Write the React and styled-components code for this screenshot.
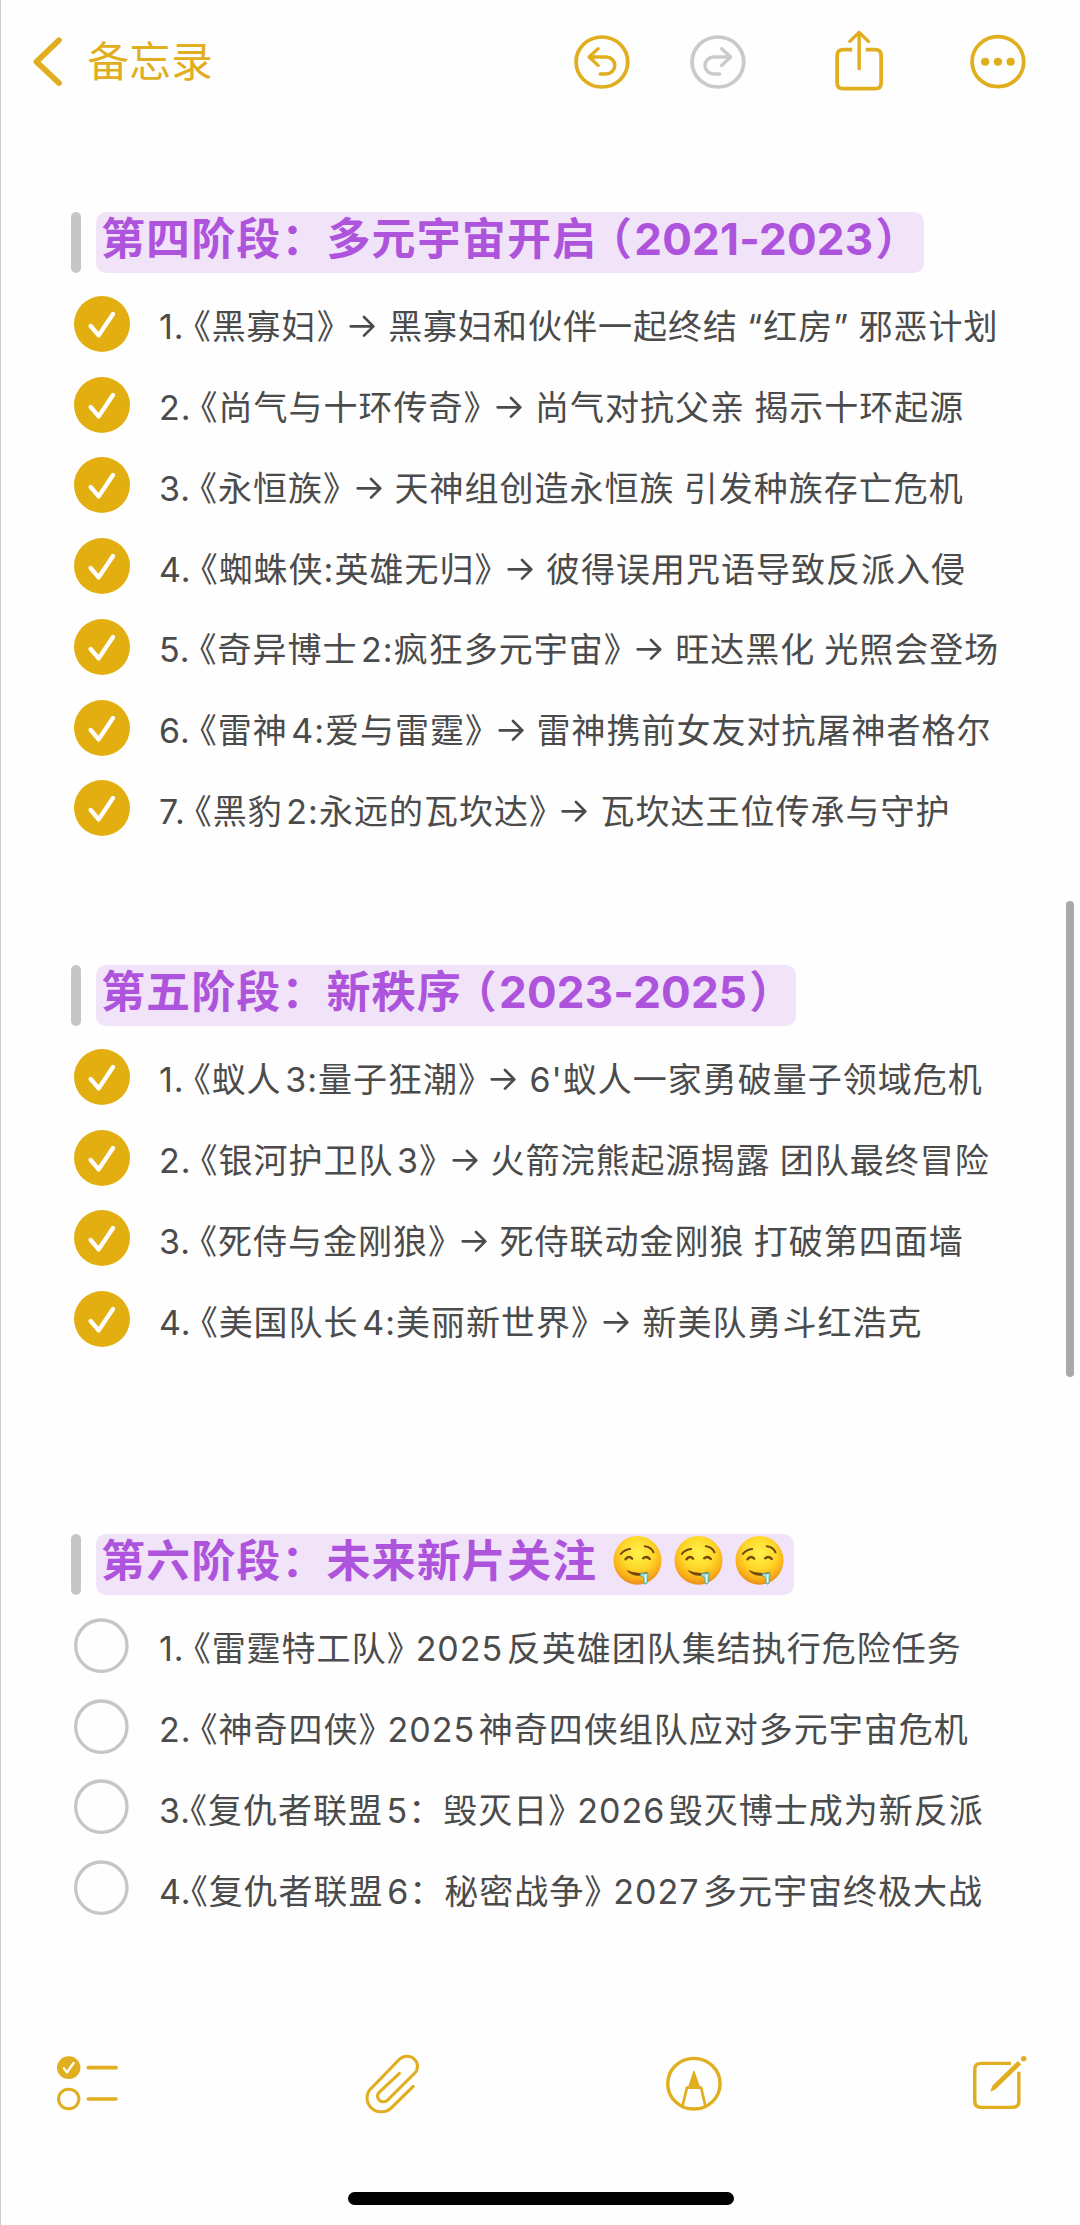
import styled, { createGlobalStyle } from "styled-components";

const GOLD = "#e0ae1e";
const GREY = "#c6c6c6";

const GlobalStyle = createGlobalStyle`
  * {
    box-sizing: border-box;
  }

  body {
    margin: 0;
    background: #fefefe;
    font-family: Inter, "Noto Sans CJK SC", sans-serif;
  }

  svg {
    display: block;
    overflow: visible;
  }
`;

const Screen = styled.main`
  position: relative;
  display: flex;
  flex-direction: column;
  width: 1080px;
  height: 2225px;
  overflow: hidden;
  border-left: 1px solid #cbcbcb;
`;

const Header = styled.header`
  display: grid;
  grid-template-columns: 541px 115.4px 143.9px 136.4px 1fr;
  align-items: center;
  height: 124px;
  padding-left: 32.4px;
`;

const BackButton = styled.div`
  display: flex;
  align-items: center;
  gap: 26px;
  color: ${GOLD};
  font-size: 41.5px;
  letter-spacing: 0.4px;
  line-height: 60px;
`;

const ShareButton = styled.div`
  padding-bottom: 5px;
`;

const Note = styled.div`
  flex: 1;
  padding: 88px 0 0 70px;
`;

const Section = styled.section`
  height: ${({ $height }) => $height}px;
`;

const Heading = styled.h2`
  display: flex;
  gap: 15px;
  height: 61px;
  margin: 0 0 10.6px;
  color: #ae54dc;
  font-size: 44px;
  font-weight: 700;
  line-height: 55px;
  white-space: pre;

  &::before {
    content: "";
    width: 10px;
    border-radius: 5px;
    background: ${GREY};
  }
`;

const Highlight = styled.span`
  display: flex;
  align-items: flex-start;
  width: ${({ $width }) => $width}px;
  padding-left: 5px;
  border-radius: 10px;
  background: #f1e4f9;
  letter-spacing: 1.1px;
`;

const Years = styled.span`
  display: flex;
  gap: 2px;
  margin-left: 13px;
  letter-spacing: 0.2px;
`;

const Faces = styled.span`
  display: flex;
  gap: 12px;
  padding: 2px 0 0 16px;
`;

const Item = styled.div`
  display: flex;
  align-items: center;
  height: 80.75px;
  padding-left: 3px;
`;

const Text = styled.span`
  display: flex;
  margin-left: 29px;
  padding-top: 7px;
  color: #4b4b4b;
  font-size: 34px;
  line-height: 50px;
  letter-spacing: 1px;
  white-space: pre;
`;

const Part = styled.span`
  margin-left: ${({ $gap = 0 }) => $gap}px;
  word-spacing: ${({ $narrow }) => ($narrow ? "-7px" : "-1.4px")};
`;

// Brackets that take half of a full-width cell
const Half = styled.span`
  font-feature-settings: "halt";
`;

const Toolbar = styled.nav`
  display: grid;
  grid-template-columns: 308.9px 300.7px 305.8px 1fr;
  align-items: center;
  height: 60px;
  margin-bottom: 79px;
  padding-left: 55.8px;
`;

const HomeIndicator = styled.div`
  width: 386px;
  height: 13px;
  margin: 0 0 20px 347px;
  border-radius: 7px;
  background: #000;
`;

const Scrollbar = styled.div`
  position: absolute;
  top: 901px;
  right: 6px;
  width: 8px;
  height: 476px;
  border-radius: 4px;
  background: #a9a9a9;
`;

const sections = [
  {
    title: "第四阶段：",
    name: "多元宇宙开启",
    years: "2021-2023",
    width: 828,
    height: 753,
    done: true,
    items: [
      { number: "1.", movie: "黑寡妇", text: "黑寡妇和伙伴一起终结 “红房” 邪恶计划" },
      { number: "2.", movie: "尚气与十环传奇", text: "尚气对抗父亲 揭示十环起源" },
      { number: "3.", movie: "永恒族", text: "天神组创造永恒族 引发种族存亡危机" },
      { number: "4.", movie: "蜘蛛侠:英雄无归", text: "彼得误用咒语导致反派入侵" },
      { number: "5.", movie: "奇异博士 2:疯狂多元宇宙", text: "旺达黑化 光照会登场" },
      { number: "6.", movie: "雷神 4:爱与雷霆", text: "雷神携前女友对抗屠神者格尔" },
      { number: "7.", movie: "黑豹 2:永远的瓦坎达", text: "瓦坎达王位传承与守护" },
    ],
  },
  {
    title: "第五阶段：",
    name: "新秩序",
    years: "2023-2025",
    width: 700,
    height: 569,
    done: true,
    items: [
      { number: "1.", movie: "蚁人 3:量子狂潮", text: "6'蚁人一家勇破量子领域危机" },
      { number: "2.", movie: "银河护卫队 3", text: "火箭浣熊起源揭露 团队最终冒险" },
      { number: "3.", movie: "死侍与金刚狼", text: "死侍联动金刚狼 打破第四面墙" },
      { number: "4.", movie: "美国队长 4:美丽新世界", text: "新美队勇斗红浩克" },
    ],
  },
  {
    title: "第六阶段：",
    name: "未来新片关注",
    faces: 3,
    width: 698,
    height: 400,
    done: false,
    items: [
      { number: "1.", movie: "雷霆特工队", text: "2025 反英雄团队集结执行危险任务" },
      { number: "2.", movie: "神奇四侠", text: "2025 神奇四侠组队应对多元宇宙危机" },
      { number: "3.", movie: "复仇者联盟 5：毁灭日", text: "2026 毁灭博士成为新反派", tight: true },
      { number: "4.", movie: "复仇者联盟 6：秘密战争", text: "2027 多元宇宙终极大战", tight: true },
    ],
  },
];

const Stroke = ({ w, h, box, color = GOLD, width = 11, children }) => (
  <svg
    width={w}
    height={h}
    viewBox={box}
    preserveAspectRatio="none"
    fill="none"
    stroke={color}
    strokeWidth={width}
    strokeLinecap="round"
    strokeLinejoin="round"
  >
    {children}
  </svg>
);

const BackIcon = () => (
  <Stroke w={28} h={50} box="0 0 81 150" width={17}>
    <path d="M75 10 L10 74 L75 138" />
  </Stroke>
);

const UndoIcon = ({ flip, color }) => (
  <Stroke w={55.8} h={54} box="0 0 162 162" color={color}>
    <circle cx="81" cy="81" r="75" />
    <g transform={flip ? "translate(162 0) scale(-1 1)" : undefined} strokeWidth="10">
      <path d="M70 41 L44 66 L70 91 M44 66 H93 A25 25 0 0 1 93 117 H76" />
    </g>
  </Stroke>
);

const ShareIcon = () => (
  <Stroke w={49.6} h={60} box="0 0 144 180">
    <path
      strokeLinecap="butt"
      d="M53 59 H27 Q9 59 9 77 V158 Q9 176 27 176 H119 Q137 176 137 158 V77 Q137 59 119 59 H92"
    />
    <path d="M73 8 V116 M46 34 L73 7 L100 34" strokeWidth="10" />
  </Stroke>
);

const MoreIcon = () => (
  <Stroke w={55.8} h={54} box="0 0 162 162">
    <circle cx="81" cy="80" r="75" />
    <g fill={GOLD} stroke="none">
      <circle cx="44" cy="80" r="12" />
      <circle cx="81" cy="80" r="12" />
      <circle cx="118" cy="80" r="12" />
    </g>
  </Stroke>
);

const Check = ({ done }) => (
  <svg width="56" height="56" viewBox="0 0 168 168" fill="none">
    {done ? (
      <>
        <circle cx="84" cy="84" r="84" fill="#e3ae10" />
        <path
          d="M50 90 L74 118 L117 54"
          stroke="#fff"
          strokeWidth="13"
          strokeLinecap="round"
          strokeLinejoin="round"
        />
      </>
    ) : (
      <circle cx="82" cy="83" r="77" stroke={GREY} strokeWidth="10" />
    )}
  </svg>
);

const ChecklistIcon = () => (
  <Stroke w={61} h={56} box="0 0 177 168">
    <circle cx="34" cy="38" r="34" fill={GOLD} stroke="none" />
    <path d="M20 40 L29 52 L48 24" stroke="#fff" strokeWidth="7" />
    <circle cx="34" cy="132" r="29.5" strokeWidth="9" />
    <path d="M91 38 H171 M91 132 H171" />
  </Stroke>
);

const ClipIcon = () => (
  <Stroke w={51.7} h={58} box="0 0 150 174" width={9}>
    <path d="M137 97 L72 163 A40 40 0 0 1 17 101 L97 16 A30 30 0 0 1 141 58 L63 138 A16 16 0 0 1 38 115 L97 58" />
  </Stroke>
);

const MarkerIcon = () => (
  <Stroke w={55.8} h={55} box="0 0 162 165" width={10}>
    <circle cx="81" cy="83" r="76" />
    <path d="M47 153 L61 95 H102 L115 153" strokeWidth="8" />
    <path d="M81 47 L67 92 H96 Z" fill={GOLD} strokeWidth="5" />
  </Stroke>
);

const ComposeIcon = () => (
  <Stroke w={55.8} h={56} box="0 0 162 168" width={10}>
    <path
      strokeLinecap="butt"
      d="M113 25 H26 Q8 25 8 43 V139 Q8 157 26 157 H118 Q136 157 136 139 V50"
    />
    <path
      fill={GOLD}
      stroke="none"
      d="M53 110 L58 95 Q59 93 61 90 L133 18 L143 28 L70 101 Q68 103 66 104 Z"
    />
    <circle cx="150" cy="11" r="8" fill={GOLD} stroke="none" />
  </Stroke>
);

const ArrowIcon = () => (
  <Stroke w={26} h={50} box="0 0 78 150" color="#4b4b4b" width={8}>
    <path d="M5 73 H72 M45 45 L73 73 L45 101" />
  </Stroke>
);

const DroolingFace = () => (
  <svg width="49" height="49" viewBox="0 0 144 147" fill="none" strokeLinecap="round">
    <defs>
      <radialGradient id="face" cx="0.5" cy="0.35" r="0.65">
        <stop offset="0" stopColor="#fff04a" />
        <stop offset="0.5" stopColor="#fed92b" />
        <stop offset="0.82" stopColor="#fbae17" />
        <stop offset="1" stopColor="#e88d1e" />
      </radialGradient>
    </defs>
    <ellipse cx="72" cy="73" rx="72" ry="73" fill="url(#face)" />
    <g stroke="#71470d" strokeWidth="6">
      <path d="M22 54 Q32 41 50 39 M94 31 Q113 33 120 49" />
      <path d="M36 70 Q46 57 56 68 M89 67 Q99 58 109 69" strokeWidth="7" />
    </g>
    <path d="M39 102 Q71 117 103 107 Q95 120 72 119 Q49 118 39 102 Z" fill="#71470d" />
    <path
      d="M82 113 Q93 114 103 110 Q104 125 101 140 Q98 148 92 142 L91 127 Q88 120 82 120 Z"
      fill="#a7dbd0"
      stroke="#58aaa5"
      strokeWidth="3"
    />
    <path d="M96 118 V138" stroke="#e2fff6" strokeWidth="4" />
  </svg>
);

const NoteItem = ({ item, done }) => (
  <Item>
    <Check done={done} />
    <Text>
      <Part>{item.number}</Part>
      <Part $gap={item.tight ? -1 : 9} $narrow>
        <Half>《</Half>
        {item.movie}
        <Half>》</Half>
      </Part>
      {done && (
        <Part $gap={14.5}>
          <ArrowIcon />
        </Part>
      )}
      <Part $gap={done ? 13 : 11} $narrow={!done}>
        {item.text}
      </Part>
    </Text>
  </Item>
);

const App = () => (
  <>
    <GlobalStyle />
    <Screen>
      <Header>
        <BackButton>
          <BackIcon />
          <span>备忘录</span>
        </BackButton>
        <UndoIcon />
        <UndoIcon flip color="#cacaca" />
        <ShareButton>
          <ShareIcon />
        </ShareButton>
        <MoreIcon />
      </Header>

      <Note>
        {sections.map((section) => (
          <Section key={section.title} $height={section.height}>
            <Heading>
              <Highlight $width={section.width}>
                {section.title}
                {section.name}
                {section.years && (
                  <Years>
                    <Half>（</Half>
                    {section.years}
                    <Half>）</Half>
                  </Years>
                )}
                {section.faces && (
                  <Faces>
                    {Array.from({ length: section.faces }, (_, i) => (
                      <DroolingFace key={i} />
                    ))}
                  </Faces>
                )}
              </Highlight>
            </Heading>
            {section.items.map((item) => (
              <NoteItem key={item.movie} item={item} done={section.done} />
            ))}
          </Section>
        ))}
      </Note>

      <Toolbar>
        <ChecklistIcon />
        <ClipIcon />
        <MarkerIcon />
        <ComposeIcon />
      </Toolbar>
      <HomeIndicator />
      <Scrollbar />
    </Screen>
  </>
);

export default App;
